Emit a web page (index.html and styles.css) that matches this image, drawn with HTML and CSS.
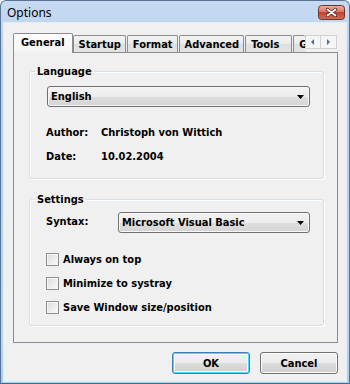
FILE: index.html
```html
<!DOCTYPE html>
<html lang="en">
<head>
	<meta charset="UTF-8">
	<title>Options</title>
	<link rel="stylesheet" href="styles.css">
</head>
<body>
	<div class="window">
		<div class="titlebar">
			<span class="title">Options</span>
			<span class="close">
				<svg width="27" height="15" viewBox="0 0 27 15">
					<defs>
						<linearGradient id="close-bg" x1="0" y1="0" x2="0" y2="1">
							<stop offset="0" stop-color="#eab0a4"/>
							<stop offset="0.45" stop-color="#d9786a"/>
							<stop offset="0.5" stop-color="#c4432f"/>
							<stop offset="1" stop-color="#d0705a"/>
						</linearGradient>
					</defs>
					<rect x="0.5" y="0.5" width="26" height="14" rx="3" fill="url(#close-bg)" stroke="#6e3429"/>
					<path d="M9.5 4.5 L17.5 10.5 M17.5 4.5 L9.5 10.5" stroke="#4b1d15" stroke-width="3.4" stroke-linecap="round"/>
					<path d="M9.5 4.5 L17.5 10.5 M17.5 4.5 L9.5 10.5" stroke="#fff" stroke-width="1.8" stroke-linecap="round"/>
				</svg>
			</span>
		</div>
		<div class="client">
			<div class="tabs">
				<div class="tab tab-selected">General</div>
				<div class="tab">Startup</div>
				<div class="tab">Format</div>
				<div class="tab">Advanced</div>
				<div class="tab">Tools</div>
				<div class="tab tab-cut">General</div>
				<div class="tab-scroll">
					<span class="tab-scroll-btn">
						<svg width="4" height="6" viewBox="0 0 4 6"><path d="M3 0 L0 3 L3 6 Z" fill="#4170ad"/></svg>
					</span>
					<span class="tab-scroll-btn">
						<svg width="4" height="6" viewBox="0 0 4 6"><path d="M0 0 L3 3 L0 6 Z" fill="#4170ad"/></svg>
					</span>
				</div>
			</div>
			<div class="panel">
				<fieldset class="group group-language">
					<legend>Language</legend>
					<div class="combo">
						<span>English</span>
						<svg width="7" height="4" viewBox="0 0 7 4"><path d="M0 0 H7 L3.5 4 Z" fill="#000"/></svg>
					</div>
					<div class="info">
						<span>Author:</span><span>Christoph von Wittich</span>
						<span>Date:</span><span>10.02.2004</span>
					</div>
				</fieldset>
				<fieldset class="group group-settings">
					<legend>Settings</legend>
					<div class="syntax-row">
						<span class="syntax-label">Syntax:</span>
						<div class="combo combo-syntax">
							<span>Microsoft Visual Basic</span>
							<svg width="7" height="4" viewBox="0 0 7 4"><path d="M0 0 H7 L3.5 4 Z" fill="#000"/></svg>
						</div>
					</div>
					<label class="check"><input type="checkbox"><span>Always on top</span></label>
					<label class="check"><input type="checkbox"><span>Minimize to systray</span></label>
					<label class="check"><input type="checkbox"><span>Save Window size/position</span></label>
				</fieldset>
			</div>
			<div class="buttons">
				<button class="btn btn-default">OK</button>
				<button class="btn">Cancel</button>
			</div>
		</div>
	</div>
</body>
</html>
```
FILE: styles.css
```css
*{
	box-sizing: border-box;
}
body{
	margin: 0;
	font: bold 11px "DejaVu Sans Condensed", "Liberation Sans", sans-serif;
	color: #000;
}
.window{
	width: 350px;
	height: 384px;
	display: flex;
	flex-direction: column;
	border: 1px solid #587394;
	border-bottom-color: #3d6f95;
	border-radius: 6px 6px 0 0;
	padding: 0 3px 2px;
	background: linear-gradient(#c6dbf2, #b8cfeb 60px, #bcd3ee 340px, #9fd3ee);
}
.titlebar{
	height: 22px;
	display: flex;
	align-items: center;
	justify-content: space-between;
	padding: 0 1px 0 3px;
}
.title{
	font: normal 12px "Noto Sans", "Open Sans", sans-serif;
	color: #000;
}
.close{
	display: flex;
	margin-top: 1px;
}
.client{
	flex: 1;
	background: #f0f0f0;
	padding: 10px 8px 0 9px;
	box-shadow: 0 0 0 1px #e4edf7;
}
.tabs{
	display: flex;
	align-items: flex-end;
	height: 20px;
	margin-bottom: -1px;
	position: relative;
	z-index: 1;
}
.tab{
	min-width: 47px;
	height: 17px;
	margin-bottom: 1px;
	margin-right: 1px;
	padding: 1px 4px 0 5px;
	line-height: 15px;
	border: 1px solid #898c95;
	border-bottom: none;
	border-radius: 2px 2px 0 0;
	background: linear-gradient(#f3f3f3, #ebebeb 50%, #dedede 51%, #e4e4e4);
	white-space: nowrap;
}
.tab-selected{
	height: 20px;
	margin-bottom: 0;
	margin-right: 0;
	padding: 0 7px;
	line-height: 18px;
	background: linear-gradient(#fdfdfd, #f4f4f4);
}
.tab-cut{
	min-width: 0;
	width: 12px;
	overflow: hidden;
	margin-right: 0;
	padding-right: 0;
	border-right: none;
}
.tab-scroll{
	display: flex;
	margin-bottom: 4px;
}
.tab-scroll-btn{
	width: 16px;
	height: 14px;
	display: flex;
	align-items: center;
	justify-content: center;
	border: 1px solid #d2d2d2;
	background: #f5f5f5;
}
.tab-scroll-btn + .tab-scroll-btn{
	border-left: none;
}
.panel{
	height: 291px;
	border: 1px solid #898c95;
	background: #f0f0f0;
	padding: 12px 13px 0 15px;
}
.group{
	margin: 0;
	border: 1px solid #d5dfe5;
	border-radius: 3px;
	box-shadow: inset 1px 1px 0 #fff, 1px 1px 0 #fff;
	padding: 8px 13px 15px 17px;
}
.group legend{
	padding: 0 2px;
	margin-left: -12px;
	line-height: 13px;
}
.group-settings{
	margin-top: 14px;
	padding-top: 6px;
	padding-bottom: 11px;
}
.combo{
	height: 21px;
	display: flex;
	align-items: center;
	justify-content: space-between;
	padding: 0 5px 0 3px;
	border: 1px solid #707070;
	border-radius: 3px;
	background: linear-gradient(#f3f3f3, #ececec 50%, #dedede 51%, #d4d4d4);
	box-shadow: inset 0 0 0 1px #f8f8f8;
}
.info{
	display: grid;
	grid-template-columns: 55px auto;
	row-gap: 11px;
	margin-top: 19px;
	margin-left: -1px;
	line-height: 13px;
}
.syntax-row{
	display: flex;
	align-items: center;
	margin-left: -1px;
}
.syntax-label{
	width: 72px;
	margin-top: -3px;
}
.combo-syntax{
	flex: 1;
}
.check{
	display: flex;
	align-items: center;
	gap: 4px;
	height: 13px;
	margin-top: 11px;
	margin-left: -1px;
	line-height: 13px;
}
.syntax-row + .check{
	margin-top: 20px;
}
.check input{
	appearance: none;
	margin: 0;
	width: 13px;
	height: 13px;
	border: 1px solid #8e8f8f;
	background: linear-gradient(135deg, #dcdcdc, #fbfbfb);
	box-shadow: inset 0 0 0 1px #f4f4f4;
}
.buttons{
	display: flex;
	justify-content: flex-end;
	gap: 10px;
	margin-top: 9px;
}
.btn{
	width: 78px;
	height: 22px;
	font: inherit;
	color: #000;
	border: 1px solid #707070;
	border-radius: 3px;
	background: linear-gradient(#f2f2f2, #ebebeb 50%, #dddddd 51%, #cfcfcf);
	box-shadow: inset 0 0 0 1px #fcfcfc;
	padding: 0;
}
.btn-default{
	border-color: #3c7fb1;
	box-shadow: inset 0 0 0 1px #48d8fb, inset 0 0 0 2px #f5fbfe;
}
```
